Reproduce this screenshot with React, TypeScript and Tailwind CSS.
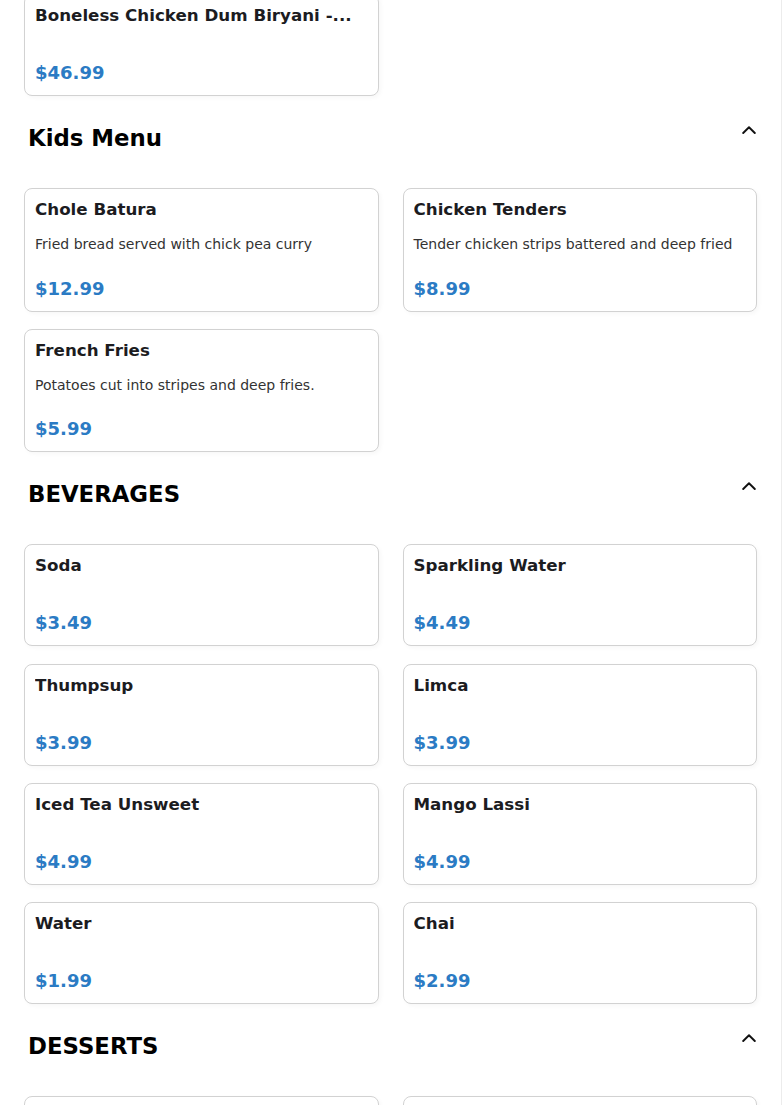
import React from "react";

type Item = { name: string; desc?: string; price: string };

const sections: { title: string; items: Item[] }[] = [
  {
    title: "Kids Menu",
    items: [
      { name: "Chole Batura", desc: "Fried bread served with chick pea curry", price: "$12.99" },
      { name: "Chicken Tenders", desc: "Tender chicken strips battered and deep fried", price: "$8.99" },
      { name: "French Fries", desc: "Potatoes cut into stripes and deep fries.", price: "$5.99" },
    ],
  },
  {
    title: "BEVERAGES",
    items: [
      { name: "Soda", price: "$3.49" },
      { name: "Sparkling Water", price: "$4.49" },
      { name: "Thumpsup", price: "$3.99" },
      { name: "Limca", price: "$3.99" },
      { name: "Iced Tea Unsweet", price: "$4.99" },
      { name: "Mango Lassi", price: "$4.99" },
      { name: "Water", price: "$1.99" },
      { name: "Chai", price: "$2.99" },
    ],
  },
  {
    title: "DESSERTS",
    items: [
      { name: "\u00a0", price: "\u00a0" },
      { name: "\u00a0\u00a0", price: "\u00a0" },
    ],
  },
];

function Card({ item }: { item: Item }) {
  return (
    <div className="flex flex-col border border-[#d2d2d2] rounded-[8px] bg-white px-[10px] pt-[9px] pb-[11px] shadow-[2px_2px_4px_rgba(0,0,0,0.03)]">
      <div className="text-[16.7px] leading-[22px] font-bold text-[#1c1c1f] whitespace-nowrap overflow-hidden">
        {item.name}
      </div>
      <div className={item.desc ? "mt-[14px] text-[14px] leading-[21.5px] text-[#333333]" : "mt-[14px] h-0"}>
        {item.desc}
      </div>
      <div className="mt-[22px] text-[18px] leading-[22px] font-bold text-[#2b7bc4]">{item.price}</div>
    </div>
  );
}

function Chevron() {
  return (
    <svg width="14" height="8" viewBox="0 0 14 8" className="mt-[7.7px] shrink-0" aria-hidden="true">
      <path d="M1.2 7 L7 1.3 L12.8 7" fill="none" stroke="#111111" strokeWidth="1.9" strokeLinecap="round" strokeLinejoin="round" />
    </svg>
  );
}

export default function App() {
  return (
    <div
      className="w-full h-[1105px] bg-white border-r border-[#ececec] overflow-hidden"
      style={{ fontFamily: '"DejaVu Sans", "Liberation Sans", sans-serif' }}
    >
      <div className="px-[24px] mt-[-6px]">
        <div className="grid grid-cols-2 gap-x-[24px]">
          <Card item={{ name: "Boneless Chicken Dum Biryani -...", price: "$46.99" }} />
        </div>
        {sections.map((s) => (
          <section key={s.title} className="pt-[22px]">
            <div className="flex items-start justify-between pl-[4px] pr-[1px]">
              <h2 className="mt-[7px] text-[22.8px] leading-[27px] font-bold text-black">{s.title}</h2>
              <Chevron />
            </div>
            <div className="mt-[36px] grid grid-cols-2 gap-x-[24px] gap-y-[17.3px]">
              {s.items.map((it, i) => (
                <Card key={s.title + i} item={it} />
              ))}
            </div>
          </section>
        ))}
      </div>
    </div>
  );
}
